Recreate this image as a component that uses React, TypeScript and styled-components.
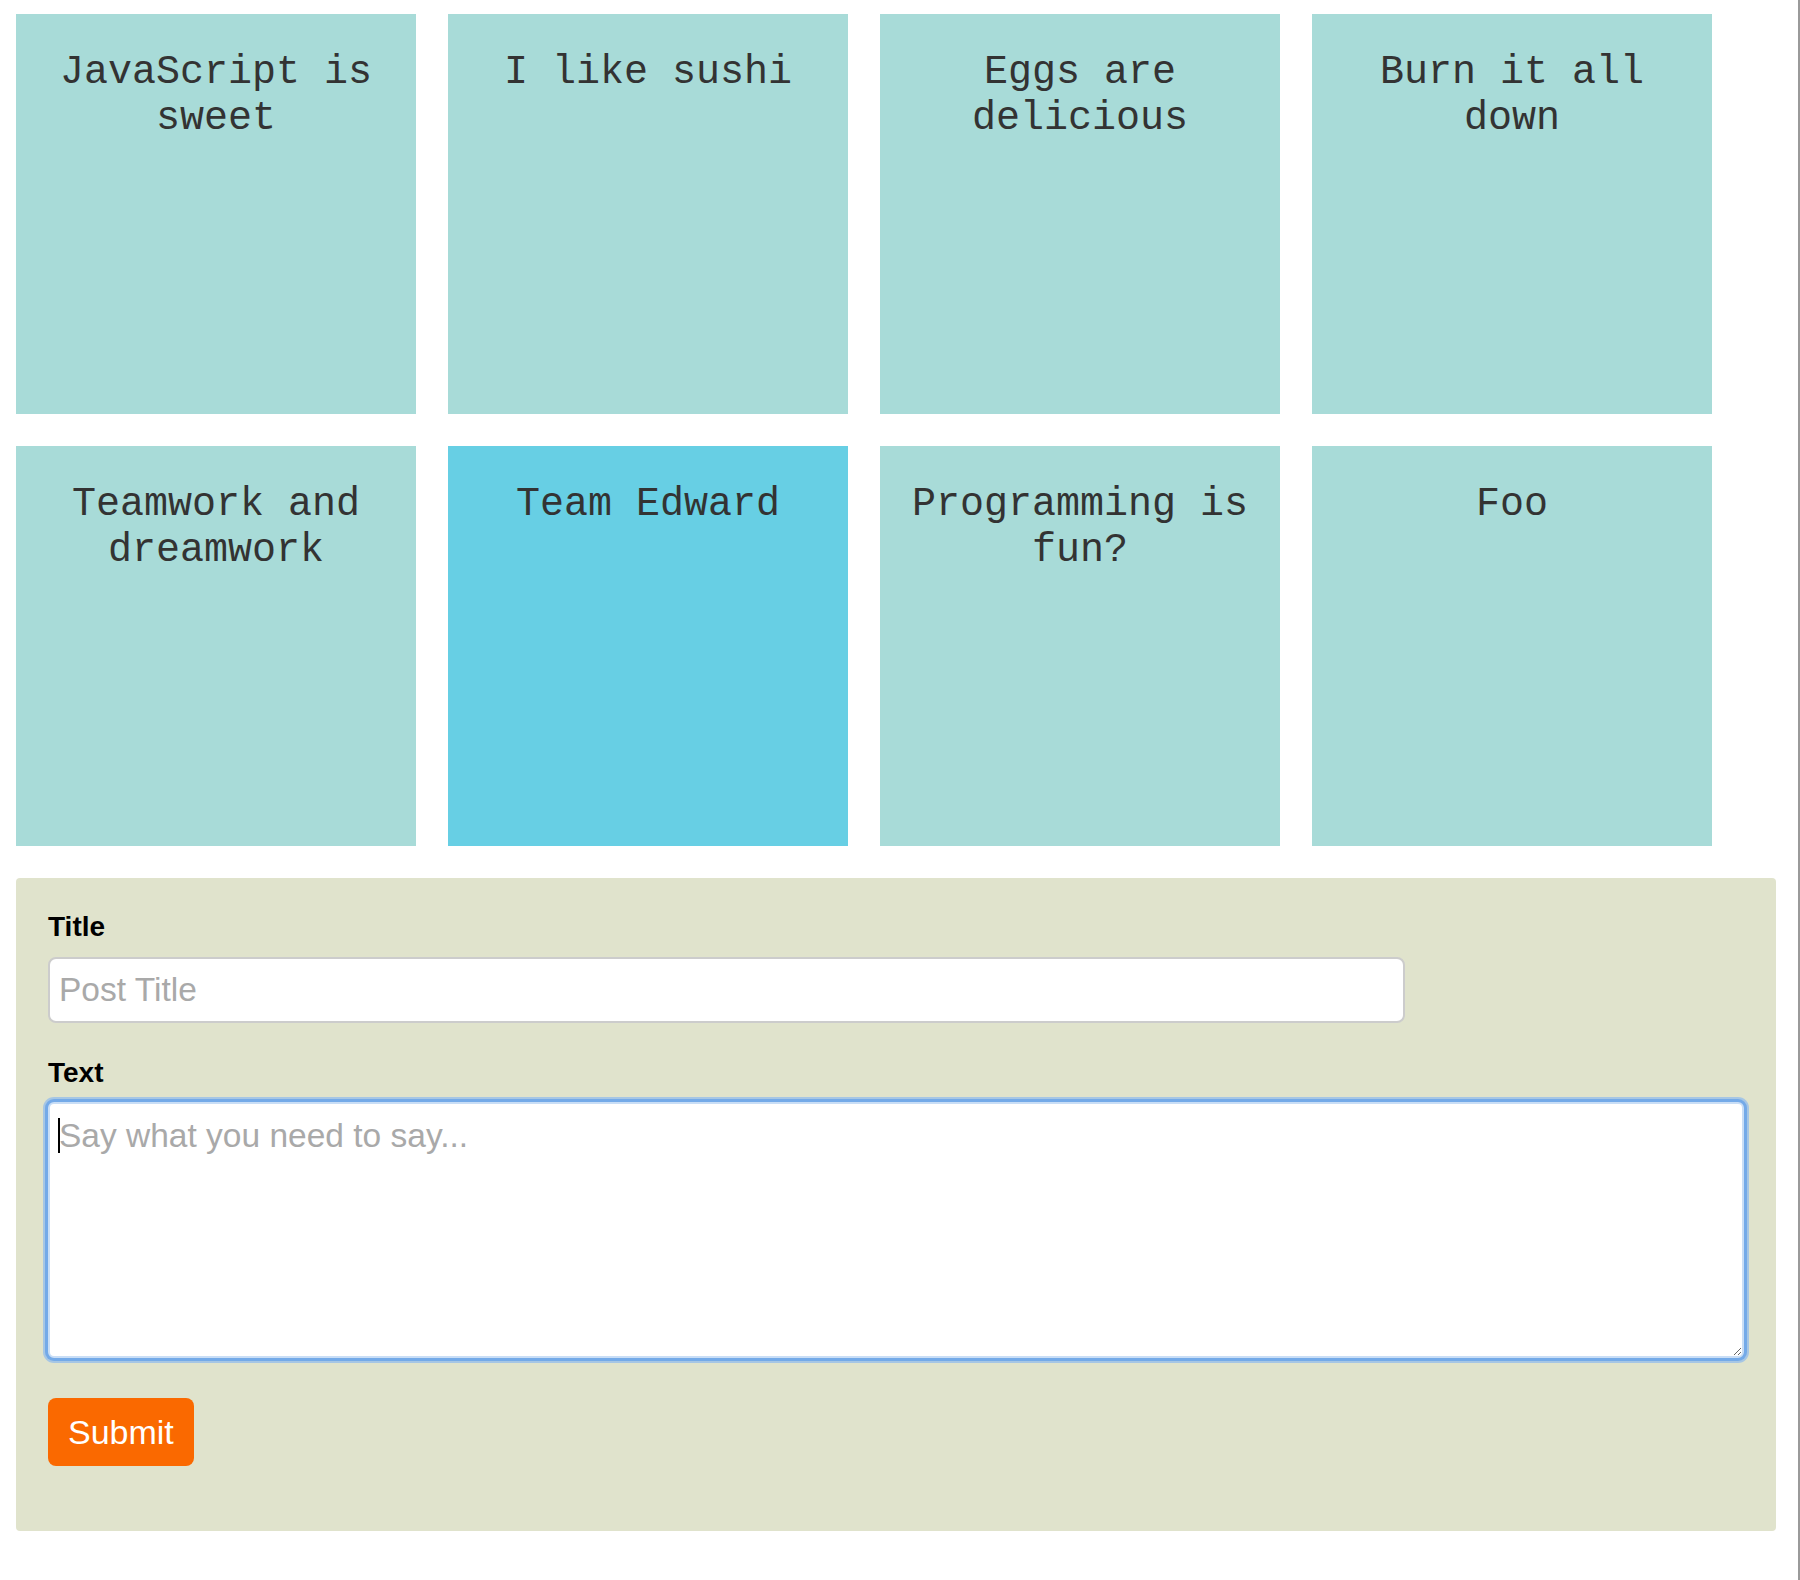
import React from "react";
import styled, { createGlobalStyle } from "styled-components";

const GlobalStyle = createGlobalStyle`
  html, body {
    margin: 0;
    padding: 0;
    background: #ffffff;
  }
  body {
    font-family: "Liberation Sans", Arial, sans-serif;
  }
  * { box-sizing: border-box; }
`;

const Page = styled.div`
  padding: 14px 16px 40px 16px;
  width: 1800px;
`;

const Board = styled.div`
  display: grid;
  grid-template-columns: repeat(4, 400px);
  grid-auto-rows: 400px;
  gap: 32px;
`;

const Note = styled.div<{ $active?: boolean }>`
  background: ${(p) => (p.$active ? "#67cfe4" : "#a8dbd8")};
  padding: 36px 20px 20px;
  font-family: "Liberation Mono", "Courier New", monospace;
  font-size: 40px;
  line-height: 46px;
  color: #333333;
  text-align: center;
`;

const Form = styled.form`
  margin-top: 32px;
  width: 1760px;
  background: #e0e3cc;
  border-radius: 4px;
  padding: 33px 32px 65px 32px;
  display: flex;
  flex-direction: column;
  align-items: flex-start;
`;

const Label = styled.label<{ $gap: number }>`
  display: block;
  margin-top: ${(p) => p.$gap}px;
  font-family: "Liberation Sans", Arial, sans-serif;
  font-weight: 700;
  font-size: 28px;
  line-height: 32px;
  color: #000;
`;

const TitleInput = styled.input`
  margin-top: 14px;
  width: 80%;
  height: 66px;
  border: 2px solid #cccccc;
  border-radius: 8px;
  background: #fff;
  padding: 0 9px;
  font-family: "Liberation Sans", Arial, sans-serif;
  font-size: 33.5px;
  color: #333;
  outline: none;
  &::placeholder { color: #a9a9a9; }
`;

const AreaWrap = styled.div`
  position: relative;
  margin-top: 13px;
  width: 100%;
`;

const TextArea = styled.textarea`
  display: block;
  width: 100%;
  height: 256px;
  border: 2px solid #c9def6;
  border-radius: 6px;
  box-shadow: 0 0 0 3px #74aae8, 0 0 0 5px #a6c6e4;
  background: #fff;
  padding: 14px 9px;
  font-family: "Liberation Sans", Arial, sans-serif;
  font-size: 33.5px;
  line-height: 36px;
  color: #333;
  outline: none;
  resize: vertical;
  &::placeholder { color: #a9a9a9; }
`;

const Caret = styled.span`
  position: absolute;
  left: 10px;
  top: 16px;
  width: 2px;
  height: 35px;
  background: #000;
  pointer-events: none;
`;

const SubmitButton = styled.button`
  margin-top: 40px;
  height: 68px;
  padding: 0 20px;
  border: none;
  border-radius: 8px;
  background: #fa6900;
  color: #ffffff;
  font-family: "Liberation Sans", Arial, sans-serif;
  font-size: 34px;
  cursor: pointer;
`;

const WindowEdge = styled.div`
  position: fixed;
  top: 0;
  right: 0;
  bottom: 0;
  width: 2px;
  background: #9a9a9a;
`;

const notes = [
  "JavaScript is sweet",
  "I like sushi",
  "Eggs are delicious",
  "Burn it all down",
  "Teamwork and dreamwork",
  "Team Edward",
  "Programming is fun?",
  "Foo",
];

export default function App() {
  return (
    <>
      <GlobalStyle />
      <Page>
        <Board>
          {notes.map((n) => (
            <Note key={n} $active={n === "Team Edward"}>
              {n}
            </Note>
          ))}
        </Board>
        <Form onSubmit={(e) => e.preventDefault()}>
          <Label $gap={0} htmlFor="title">Title</Label>
          <TitleInput id="title" type="text" placeholder="Post Title" />
          <Label $gap={34} htmlFor="text">Text</Label>
          <AreaWrap>
            <TextArea id="text" placeholder="Say what you need to say..." />
            <Caret />
          </AreaWrap>
          <SubmitButton type="submit">Submit</SubmitButton>
        </Form>
      </Page>
      <WindowEdge />
    </>
  );
}
